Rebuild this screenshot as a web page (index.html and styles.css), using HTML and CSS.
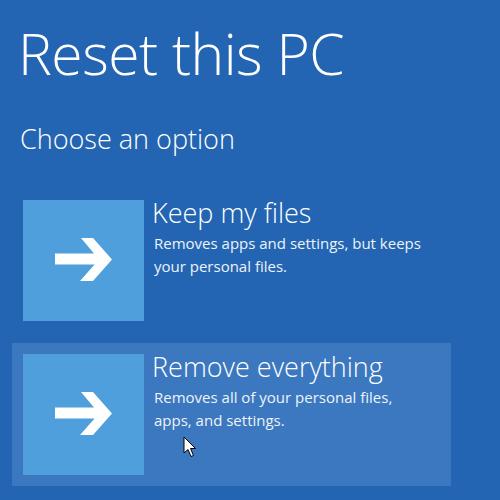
FILE: index.html
```html
<!DOCTYPE html>
<html>
<head>
<meta charset="utf-8">
<link rel="stylesheet" href="styles.css">
</head>
<body>
<main class="page">
  <h1 class="title">Reset this PC</h1>
  <h2 class="subtitle">Choose an option</h2>
  <div class="options">
    <div class="option">
      <div class="tile">
        <svg class="arrow" width="121" height="121" viewBox="0 0 121 121"><path d="M32 53.5H80V64.5H32Z M58 38H70L89 59.5L70 81H57L76 59.5Z" fill="#fff"/></svg>
      </div>
      <div class="text">
        <div class="name">Keep my files</div>
        <div class="desc">Removes apps and settings, but keeps<br>your personal files.</div>
      </div>
    </div>
    <div class="option hover">
      <div class="tile">
        <svg class="arrow" width="121" height="121" viewBox="0 0 121 121"><path d="M32 53.5H80V64.5H32Z M58 38H70L89 59.5L70 81H57L76 59.5Z" fill="#fff"/></svg>
      </div>
      <div class="text">
        <div class="name">Remove everything</div>
        <div class="desc">Removes all of your personal files,<br>apps, and settings.</div>
      </div>
    </div>
  </div>
  <svg class="cursor" width="14" height="22" viewBox="0 0 14 22"><path d="M1 1V17L5 13.5L8 20.5L10.5 19.5L7.5 12.5H12.5Z" fill="#fff" stroke="#000" stroke-width="1" stroke-linejoin="round"/></svg>
</main>
</body>
</html>
```
FILE: styles.css
```css
html, body {
  margin: 0;
  padding: 0;
  background: #2365b2;
  height: 100%;
  overflow: hidden;
}
.page {
  position: relative;
  font-family: "Open Sans", "Segoe UI", sans-serif;
  color: #fff;
  padding-top: 17px;
}
.title {
  margin: 0 0 0 18px;
  font-size: 57px;
  font-weight: 300;
  line-height: 72px;
  letter-spacing: -0.5px;
}
.subtitle {
  margin: 35px 0 0 20px;
  font-size: 27px;
  font-weight: 300;
  line-height: 30px;
}
.options {
  display: flex;
  flex-direction: column;
  gap: 11px;
  margin-top: 35px;
  margin-left: 12px;
  width: 439px;
}
.option {
  display: flex;
  padding: 11px;
  height: 121px;
  gap: 9px;
}
.option.hover {
  background: #3c78bf;
}
.tile {
  width: 121px;
  height: 121px;
  flex: none;
  background: #4e9fdb;
}
.arrow {
  display: block;
}
.name {
  font-size: 27px;
  font-weight: 300;
  line-height: 30px;
  margin-top: -2px;
  margin-left: -1px;
}
.desc {
  font-size: 15px;
  line-height: 23px;
  margin-top: 4px;
  margin-left: 1px;
  color: #eef3fa;
}
.cursor {
  position: absolute;
  left: 183px;
  top: 436px;
}
```
